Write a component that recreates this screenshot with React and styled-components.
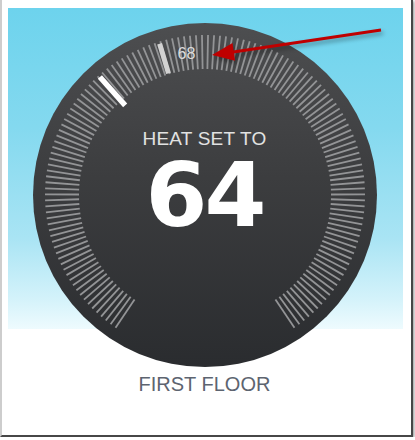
import React from 'react';
import styled, { createGlobalStyle } from 'styled-components';

const GlobalStyle = createGlobalStyle`
  html, body {
    margin: 0;
    padding: 0;
    background: #ffffff;
  }
  * {
    box-sizing: border-box;
  }
`;

const Frame = styled.div`
  width: 413px;
  height: 437px;
  padding: 8px 8px 0 6px;
  background: #ffffff;
  border-left: 2px solid #cdcdcd;
  border-right: 2px solid #474747;
  border-bottom: 2px solid #474747;
  box-shadow: 1px 1px 3px rgba(0, 0, 0, 0.45);
`;

const Card = styled.div`
  position: relative;
  height: 100%;
  display: flex;
  flex-direction: column;
  align-items: center;
  padding-top: 15px;
  background: linear-gradient(
    to bottom,
    #6dd3ed 0px,
    #84d9ef 120px,
    #a9e4f4 230px,
    #d3f2fa 290px,
    #eefbfe 321px,
    #ffffff 321px
  );
`;

const Dial = styled.div`
  position: relative;
  width: 344px;
  height: 344px;
  margin-left: -2px;
  border-radius: 50%;
  background: linear-gradient(to bottom, #4d4e50 0%, #3c3d3f 45%, #2a2c2f 100%);
  display: flex;
  flex-direction: column;
  align-items: center;
  padding-top: 105px;
`;

const Ticks = styled.svg`
  position: absolute;
  left: 0;
  top: 0;
`;

const Mode = styled.div`
  position: relative;
  font-family: 'Liberation Sans', Arial, sans-serif;
  font-size: 19px;
  line-height: 22px;
  color: #e2e2e2;
  letter-spacing: 0.2px;
`;

const Target = styled.div`
  position: relative;
  margin-top: 1px;
  font-family: 'DejaVu Sans', sans-serif;
  font-weight: bold;
  font-size: 89px;
  line-height: 88px;
  color: #ffffff;
  letter-spacing: -3px;
`;

const CurrentTemp = styled.span`
  position: absolute;
  left: 145px;
  top: 23px;
  font-family: 'Liberation Sans', Arial, sans-serif;
  font-size: 16px;
  line-height: 16px;
  color: #dcdcdc;
`;

const RoomName = styled.div`
  margin-top: 5px;
  margin-left: -2px;
  font-family: 'Liberation Sans', Arial, sans-serif;
  font-size: 20px;
  line-height: 24px;
  color: #5d6470;
`;

const Arrow = styled.svg`
  position: absolute;
  left: 0;
  top: 0;
  overflow: visible;
  filter: drop-shadow(2px 3px 2px rgba(0, 0, 0, 0.35));
`;

const C = 172;
const TICK_COUNT = 136;
const START = -146;
const END = 146;

const polar = (deg, r) => {
  const a = (deg * Math.PI) / 180;
  return [C + r * Math.sin(a), C - r * Math.cos(a)];
};

const Tick = ({ deg, inner, outer, color, width }) => {
  const [x1, y1] = polar(deg, inner);
  const [x2, y2] = polar(deg, outer);
  return <line x1={x1} y1={y1} x2={x2} y2={y2} stroke={color} strokeWidth={width} />;
};

const ticks = Array.from({ length: TICK_COUNT }, (_, i) => START + (i * (END - START)) / (TICK_COUNT - 1));

const App = () => (
  <>
    <GlobalStyle />
    <Frame>
      <Card>
        <Dial>
          <Ticks width="344" height="344" viewBox="0 0 344 344">
            {ticks.map((deg) => (
              <Tick key={deg} deg={deg} inner={126} outer={160} color="#939496" width={1.8} />
            ))}
            <Tick deg={-16.7} inner={127} outer={158} color="#d2d2d2" width={5} />
            <Tick deg={-41.7} inner={120} outer={158} color="#ffffff" width={5.5} />
          </Ticks>
          <CurrentTemp>68</CurrentTemp>
          <Mode>HEAT SET TO</Mode>
          <Target>64</Target>
        </Dial>
        <RoomName>FIRST FLOOR</RoomName>
        <Arrow width="395" height="100" viewBox="0 0 395 100">
          <line x1="373" y1="22" x2="222" y2="44.5" stroke="#bf0000" strokeWidth="3" />
          <polygon points="204,47 224.5,34.9 227.1,52.7" fill="#bf0000" />
        </Arrow>
      </Card>
    </Frame>
  </>
);

export default App;
